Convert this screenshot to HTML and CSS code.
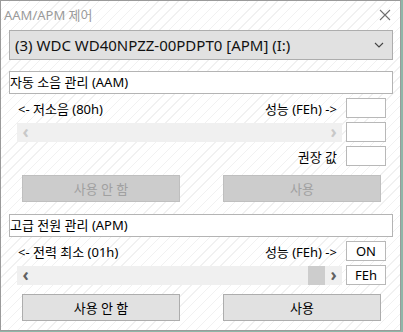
FILE: index.html
```html
<!DOCTYPE html>
<html>
<head>
    <title>AAM/APM 제어</title>
    <link rel="stylesheet" href="styles.css">
</head>
<body>
  <div class="window">
    <div class="titlebar">
      <span class="title">AAM/APM 제어</span>
      <svg class="close" width="12" height="12" viewBox="0 0 12 12"><path d="M1 1 L11 11 M11 1 L1 11" stroke="#6e6e6e" stroke-width="1.1" fill="none"/></svg>
    </div>
    <div class="content">
      <div class="combo">
        <span>(3) WDC WD40NPZZ-00PDPT0 [APM] (I:)</span>
        <svg width="10" height="6" viewBox="0 0 10 6"><path d="M1 1 L5 5 L9 1" stroke="#444" stroke-width="1.1" fill="none"/></svg>
      </div>

      <div class="group g1">자동 소음 관리 (AAM)</div>
      <div class="row r1">
        <span class="lbl-left">&lt;- 저소음 (80h)</span>
        <span class="lbl-right">성능 (FEh) -&gt;</span>
        <div class="box"></div>
      </div>
      <div class="row r2">
        <div class="scroll disabled">
          <span class="arr">&lsaquo;</span>
          <span class="arr">&rsaquo;</span>
        </div>
        <div class="box"></div>
      </div>
      <div class="row r3">
        <span class="lbl-right">권장 값</span>
        <div class="box"></div>
      </div>
      <div class="buttons b1">
        <button class="btn" disabled>사용 안 함</button>
        <button class="btn" disabled>사용</button>
      </div>

      <div class="group g2">고급 전원 관리 (APM)</div>
      <div class="row r4">
        <span class="lbl-left">&lt;- 전력 최소 (01h)</span>
        <span class="lbl-right">성능 (FEh) -&gt;</span>
        <div class="box">ON</div>
      </div>
      <div class="row r5">
        <div class="scroll">
          <span class="arr">&lsaquo;</span>
          <span class="thumb"></span>
          <span class="arr">&rsaquo;</span>
        </div>
        <div class="box">FEh</div>
      </div>
      <div class="buttons b2">
        <button class="btn">사용 안 함</button>
        <button class="btn">사용</button>
      </div>
    </div>
  </div>
</body>
</html>
```

FILE: styles.css
```css
body{
    margin: 0px;
    padding: 0px;
    background: #8fb6a8;
    font-family: "Noto Sans", "Noto Sans CJK KR", sans-serif;
}

.window{
    width: 401px;
    height: 331px;
    box-sizing: border-box;
    border: 1px solid #9a9a9a;
    background-color: #fff;
    background-image: repeating-linear-gradient(135deg, #fff 0px, #fff 6px, #f1f1f1 6px, #f1f1f1 7px);
}

.titlebar{
    height: 29px;
    display: flex;
    align-items: center;
    justify-content: space-between;
    padding: 0 9px 0 3px;
}

.title{
    color: #9a9a9a;
    font-size: 13px;
    margin-top: -2px;
}

.close{
    margin-top: -2px;
}

.content{
    padding: 0 7px 0 8px;
}

.combo{
    height: 28px;
    border: 1px solid #adadad;
    background: #e1e1e1;
    display: flex;
    align-items: center;
    justify-content: space-between;
    padding: 0 8px 0 5px;
    font-size: 15px;
    color: #111;
}

.group{
    margin-top: 11px;
    height: 21px;
    border: 1px solid #b4b4b4;
    background: #fff;
    font-size: 13px;
    line-height: 21px;
    color: #000;
}

.g2{
    margin-top: 12px;
}

.row{
    display: flex;
    align-items: center;
    padding: 0 7px 0 8px;
    font-size: 13px;
    color: #000;
}

.r1{ margin-top: 4px; }
.r2{ margin-top: 4px; }
.r3{ margin-top: 4px; }
.r4{ margin-top: 4px; }
.r5{ margin-top: 4px; }

.lbl-left{
    padding-left: 1px;
}

.lbl-right{
    margin-left: auto;
    margin-right: 9px;
}

.box{
    width: 40px;
    height: 20px;
    box-sizing: border-box;
    border: 1px solid #b8b8b8;
    background: #fff;
    font-size: 13px;
    line-height: 18px;
    text-align: center;
}

.scroll{
    flex: 1;
    height: 19px;
    margin-right: 4px;
    background: #f0f0f0;
    display: flex;
    align-items: center;
    font-size: 17px;
    font-weight: bold;
    color: #606060;
}

.scroll .arr{
    width: 17px;
    text-align: center;
    line-height: 19px;
    margin-top: -2px;
}

.scroll .arr:last-child{
    margin-left: auto;
}

.scroll.disabled{
    color: #c8c8c8;
}

.thumb{
    margin-left: auto;
    width: 17px;
    height: 19px;
    background: #cdcdcd;
}

.thumb + .arr{
    margin-left: 0 !important;
}

.buttons{
    display: flex;
    padding: 0 12px 0 13px;
    justify-content: space-between;
}

.b1{ margin-top: 9px; }
.b2{ margin-top: 9px; }

.btn{
    width: 158px;
    height: 27px;
    border: 1px solid #adadad;
    background: #e1e1e1;
    font-family: "Noto Sans", "Noto Sans CJK KR", sans-serif;
    font-size: 13px;
    color: #000;
    padding: 0;
}

.btn:disabled{
    background: #cccccc;
    border-color: #bfbfbf;
    color: #a0a0a0;
}
```
